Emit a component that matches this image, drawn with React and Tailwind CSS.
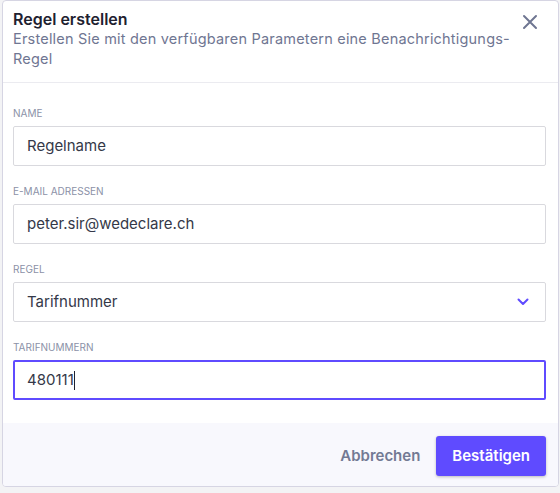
import React from 'react';

const fields = [
  { label: 'Name', value: 'Regelname' },
  { label: 'E-Mail Adressen', value: 'peter.sir@wedeclare.ch' },
];

export default function App() {
  return (
    <div className="min-h-screen bg-[#f3f3f5] pl-[2px]" style={{ fontFamily: 'Inter, "Noto Sans", sans-serif' }}>
      <div className="w-[557px] bg-white border border-[#d6d5e3] rounded-[4px] overflow-hidden">
        {/* Header */}
        <div className="flex items-start justify-between pl-[10px] pr-[20px] pt-[8px] pb-[13px] border-b border-[#ebebf0]">
          <div>
            <h2 className="text-[16px] leading-[20px] font-semibold text-[#1e2130]">Regel erstellen</h2>
            <p className="text-[14.5px] leading-[20px] tracking-[0.2px] text-[#6f7692]">
              Erstellen Sie mit den verfügbaren Parametern eine Benachrichtigungs-<br />Regel
            </p>
          </div>
          <button className="mt-[5px] text-[#6f7692]">
            <svg width="16" height="16" viewBox="0 0 16 16" fill="none" stroke="currentColor" strokeWidth="2" strokeLinecap="round">
              <path d="M2 2l12 12M14 2L2 14" />
            </svg>
          </button>
        </div>

        {/* Body */}
        <div className="flex flex-col gap-[18px] pl-[10px] pr-[12px] pt-[23px] pb-[23px]">
          {fields.map(f => (
            <div key={f.label}>
              <label className="block text-[10px] leading-[14px] uppercase text-[#8b91a7] mb-[6px]">{f.label}</label>
              <div className="h-10 flex items-center px-[13px] border border-[#d9d9de] rounded-[2px] text-[15px] text-[#343848]">
                {f.value}
              </div>
            </div>
          ))}

          <div>
            <label className="block text-[10px] leading-[14px] uppercase text-[#8b91a7] mb-[6px]">Regel</label>
            <div className="h-10 flex items-center justify-between pl-[13px] pr-[16px] border border-[#d9d9de] rounded-[2px] text-[15px] text-[#343848]">
              <span>Tarifnummer</span>
              <svg width="12" height="8" viewBox="0 0 12 8" fill="none" stroke="#5f4bff" strokeWidth="2" strokeLinecap="round" strokeLinejoin="round">
                <path d="M1.5 1.5L6 6l4.5-4.5" />
              </svg>
            </div>
          </div>

          <div>
            <label className="block text-[10px] leading-[14px] uppercase text-[#8b91a7] mb-[6px]">Tarifnummern</label>
            <div className="h-10 flex items-center px-[12px] border-2 border-[#5f4bff] rounded-[2px] text-[15px] text-[#343848]">
              <span>480111</span>
              <span className="w-px h-[19px] bg-[#1e2130]"></span>
            </div>
          </div>
        </div>

        {/* Footer */}
        <div className="flex justify-end items-center bg-[#f8f8fd] pl-[10px] pr-[12px] pt-[13px] pb-[10px]">
          <button className="h-10 px-4 text-[15px] font-semibold text-[#737a94]">Abbrechen</button>
          <button className="h-10 px-4 rounded-[3px] bg-[#5f4bff] text-white text-[15px] font-semibold shadow-[0_1px_3px_rgba(0,0,0,0.25)]">Bestätigen</button>
        </div>
      </div>
    </div>
  );
}
